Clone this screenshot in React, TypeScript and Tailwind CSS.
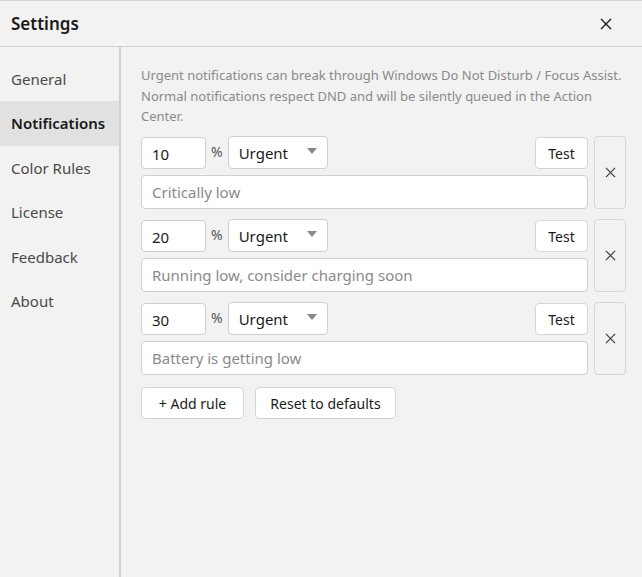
import { useState } from "react";

const navItems = ["General", "Notifications", "Color Rules", "License", "Feedback", "About"];

const initialRules = [
  { pct: "10", level: "Urgent", msg: "Critically low" },
  { pct: "20", level: "Urgent", msg: "Running low, consider charging soon" },
  { pct: "30", level: "Urgent", msg: "Battery is getting low" },
];

const CloseIcon = ({ size = 12 }: { size?: number }) => (
  <svg width={size} height={size} viewBox="0 0 12 12" fill="none" stroke="currentColor" strokeWidth="1.4">
    <path d="M1 1L11 11M11 1L1 11" />
  </svg>
);

const App = () => {
  const [active, setActive] = useState("Notifications");
  const [rules] = useState(initialRules);

  return (
    <div
      className="w-[642px] h-[577px] bg-[#f2f2f2] flex flex-col border-t border-[#d4d4d4] text-[#1a1a1a]"
      style={{ fontFamily: '"Noto Sans", "Open Sans", sans-serif' }}
    >
      <div className="h-[46px] shrink-0 flex items-center justify-between pl-[11px] pr-[30px] border-b border-[#d0d0d0]">
        <h1 className="text-[17px] font-semibold">Settings</h1>
        <button className="text-[#1a1a1a]">
          <CloseIcon />
        </button>
      </div>

      <div className="flex flex-1 min-h-0">
        <nav className="w-[121px] shrink-0 border-r-2 border-[#d0d0d0] pt-[10px] flex flex-col">
          {navItems.map((item) => {
            const isActive = item === active;
            return (
              <button
                key={item}
                onClick={() => setActive(item)}
                className={
                  "h-[44.4px] text-left pl-[11px] text-[15px] " +
                  (isActive ? "bg-[#e1e1e1] font-semibold text-[#1a1a1a]" : "text-[#4a4a4a]")
                }
              >
                {item}
              </button>
            );
          })}
        </nav>

        <main className="flex-1 pl-[20px] pr-[16px] pt-[18px]">
          <p className="text-[13px] leading-[20.5px] text-[#8a8a8a]">
            Urgent notifications can break through Windows Do Not Disturb / Focus Assist. Normal
            notifications respect DND and will be silently queued in the Action Center.
          </p>

          <div className="mt-[10px] flex flex-col gap-[11px]">
            {rules.map((rule, i) => (
              <div key={i} className="flex gap-[6px]">
                <div className="flex-1 flex flex-col gap-[6px]">
                  <div className="flex items-center h-[32px]">
                    <input
                      defaultValue={rule.pct}
                      className="w-[65px] h-[32px] bg-white border border-[#cfcfcf] rounded-[4px] px-[10px] pt-[2px] text-[15px] outline-none"
                    />
                    <span className="text-[14px] text-[#555] mx-[5px] -mt-[3px]">%</span>
                    <div className="w-[100px] h-[33px] bg-white border border-[#cfcfcf] rounded-[4px] flex items-center justify-between pl-[10px] pr-[10px]">
                      <span className="text-[15px] pt-[2px]">{rule.level}</span>
                      <svg width="10" height="6" viewBox="0 0 10 6" className="-mt-[4px]">
                        <path d="M0 0H10L5 6Z" fill="#888" />
                      </svg>
                    </div>
                    <div className="flex-1" />
                    <button className="w-[53px] h-[32px] bg-white border border-[#d6d6d6] rounded-[4px] text-[14px] pt-[1px]">
                      Test
                    </button>
                  </div>
                  <input
                    placeholder={rule.msg}
                    className="h-[34px] bg-white border border-[#cfcfcf] rounded-[4px] px-[10px] text-[15px] outline-none placeholder:text-[#8a8a8a]"
                  />
                </div>
                <button className="w-[32px] h-[73px] -mt-[1px] border border-[#d6d6d6] rounded-[4px] flex items-center justify-center text-[#444]">
                  <CloseIcon size={11} />
                </button>
              </div>
            ))}
          </div>

          <div className="mt-[12px] flex gap-[11px]">
            <button className="h-[32px] w-[103px] bg-white border border-[#d6d6d6] rounded-[4px] text-[14px] pt-[1px]">
              + Add rule
            </button>
            <button className="h-[32px] w-[141px] bg-white border border-[#d6d6d6] rounded-[4px] text-[14px] pt-[1px]">
              Reset to defaults
            </button>
          </div>
        </main>
      </div>
    </div>
  );
};

export default App;
